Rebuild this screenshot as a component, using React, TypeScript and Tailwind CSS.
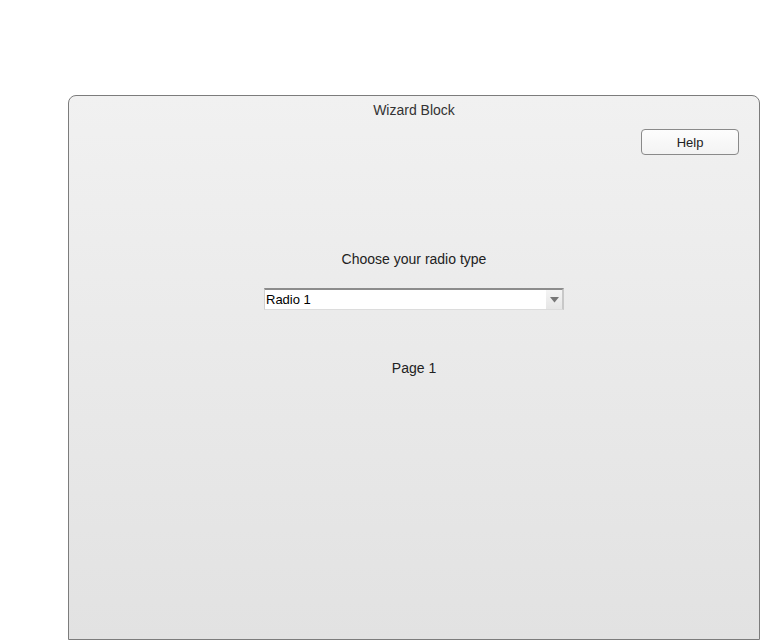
import React from "react";

const App = () => {
  return (
    <div className="w-[760px] h-[640px] bg-white overflow-hidden font-['Liberation_Sans',Arial,sans-serif]">
      <div className="ml-[68px] mt-[95px] w-[692px] h-[545px] border border-[#7c7c7c] rounded-t-[8px] bg-gradient-to-b from-[#f1f1f1] to-[#e2e2e2] flex flex-col">
        {/* Title */}
        <div className="mt-[6px] h-[16px] leading-[16px] text-center text-[14px] text-[#333]">Wizard Block</div>

        {/* Help */}
        <div className="mt-[11px] flex justify-end pr-[20px]">
          <button className="w-[98px] h-[26px] rounded-[4px] border border-[#8a8a8a] bg-gradient-to-b from-[#fdfdfd] to-[#f3f3f3] text-[13px] text-[#222] leading-none">
            Help
          </button>
        </div>

        {/* Content */}
        <div className="flex flex-col items-center">
          <div className="mt-[96px] h-[16px] leading-[16px] text-[14px] text-[#222]">Choose your radio type</div>

          <div className="mt-[21px] w-[300px] h-[22px] flex bg-white border-t-2 border-t-[#8c8c8c] border-l border-l-[#d0d0d0] border-b border-b-[#dcdcdc] border-r-2 border-r-[#c8c8c8]">
            <div className="flex-1 pl-[1px] text-[13px] leading-[19px] text-black">Radio 1</div>
            <div className="w-[16px] h-full flex items-center justify-center bg-gradient-to-b from-[#f4f4f4] to-[#e6e6e6]">
              <svg width="9" height="6" viewBox="0 0 9 6">
                <path d="M0 0 H9 L4.5 5.5 Z" fill="#777" />
              </svg>
            </div>
          </div>

          <div className="mt-[50px] h-[16px] leading-[16px] text-[14px] text-[#222]">Page 1</div>
        </div>
      </div>
    </div>
  );
};

export default App;
